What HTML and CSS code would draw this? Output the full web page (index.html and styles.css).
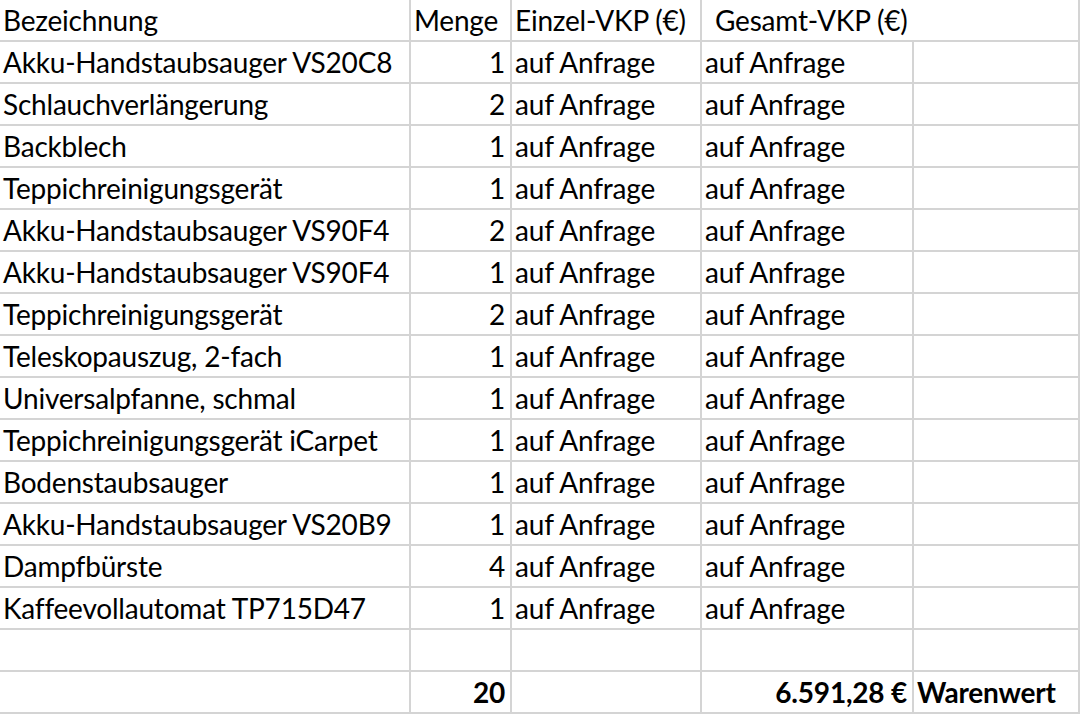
FILE: index.html
```html
<!DOCTYPE html>
<html lang="de">
<head>
<meta charset="utf-8">
<title>Warenliste</title>
<link rel="stylesheet" href="styles.css">
</head>
<body>
<table class="sheet">
  <colgroup>
    <col class="c-name"><col class="c-qty"><col class="c-unit"><col class="c-total"><col class="c-extra">
  </colgroup>
  <thead>
    <tr>
      <th class="txt">Bezeichnung</th>
      <th class="txt">Menge</th>
      <th class="txt">Einzel-VKP (€)</th>
      <th class="txt gesamt" colspan="2">Gesamt-VKP (€)</th>
    </tr>
  </thead>
  <tbody>
    <tr><td class="txt">Akku-Handstaubsauger VS20C8</td><td class="num">1</td><td class="txt">auf Anfrage</td><td class="txt">auf Anfrage</td><td></td></tr>
    <tr><td class="txt">Schlauchverlängerung</td><td class="num">2</td><td class="txt">auf Anfrage</td><td class="txt">auf Anfrage</td><td></td></tr>
    <tr><td class="txt">Backblech</td><td class="num">1</td><td class="txt">auf Anfrage</td><td class="txt">auf Anfrage</td><td></td></tr>
    <tr><td class="txt">Teppichreinigungsgerät</td><td class="num">1</td><td class="txt">auf Anfrage</td><td class="txt">auf Anfrage</td><td></td></tr>
    <tr><td class="txt">Akku-Handstaubsauger VS90F4</td><td class="num">2</td><td class="txt">auf Anfrage</td><td class="txt">auf Anfrage</td><td></td></tr>
    <tr><td class="txt">Akku-Handstaubsauger VS90F4</td><td class="num">1</td><td class="txt">auf Anfrage</td><td class="txt">auf Anfrage</td><td></td></tr>
    <tr><td class="txt">Teppichreinigungsgerät</td><td class="num">2</td><td class="txt">auf Anfrage</td><td class="txt">auf Anfrage</td><td></td></tr>
    <tr><td class="txt">Teleskopauszug, 2-fach</td><td class="num">1</td><td class="txt">auf Anfrage</td><td class="txt">auf Anfrage</td><td></td></tr>
    <tr><td class="txt">Universalpfanne, schmal</td><td class="num">1</td><td class="txt">auf Anfrage</td><td class="txt">auf Anfrage</td><td></td></tr>
    <tr><td class="txt">Teppichreinigungsgerät iCarpet</td><td class="num">1</td><td class="txt">auf Anfrage</td><td class="txt">auf Anfrage</td><td></td></tr>
    <tr><td class="txt">Bodenstaubsauger</td><td class="num">1</td><td class="txt">auf Anfrage</td><td class="txt">auf Anfrage</td><td></td></tr>
    <tr><td class="txt">Akku-Handstaubsauger VS20B9</td><td class="num">1</td><td class="txt">auf Anfrage</td><td class="txt">auf Anfrage</td><td></td></tr>
    <tr><td class="txt">Dampfbürste</td><td class="num">4</td><td class="txt">auf Anfrage</td><td class="txt">auf Anfrage</td><td></td></tr>
    <tr><td class="txt">Kaffeevollautomat TP715D47</td><td class="num">1</td><td class="txt">auf Anfrage</td><td class="txt">auf Anfrage</td><td></td></tr>
    <tr><td></td><td></td><td></td><td></td><td></td></tr>
    <tr class="sum"><td></td><td class="num">20</td><td></td><td class="num">6.591,28 €</td><td class="txt">Warenwert</td></tr>
  </tbody>
</table>
</body>
</html>
```
FILE: styles.css
```css
html, body {
  margin: 0;
  padding: 0;
  background: #ffffff;
}

.sheet {
  border-collapse: separate;
  border-spacing: 0;
  table-layout: fixed;
  width: 1080px;
  font-family: "Lato", "Open Sans", sans-serif;
  font-size: 28px;
  letter-spacing: -0.2px;
  color: #000000;
}

.c-name { width: 411px; }
.c-qty { width: 101px; }
.c-unit { width: 190px; }
.c-total { width: 212px; }
.c-extra { width: 166px; }

.sheet th,
.sheet td {
  height: 40px;
  line-height: 40px;
  padding: 0;
  border-right: 2px solid #d4d4d4;
  border-bottom: 2px solid #d4d4d4;
  white-space: nowrap;
  overflow: visible;
  font-weight: 400;
  text-align: left;
  vertical-align: middle;
  box-sizing: content-box;
}

.sheet .txt {
  padding-left: 3px;
}

.sheet .num {
  text-align: right;
  padding-right: 5px;
}

.sheet .gesamt {
  padding-left: 13px;
}

.sheet .sum td {
  font-weight: 700;
}
```
